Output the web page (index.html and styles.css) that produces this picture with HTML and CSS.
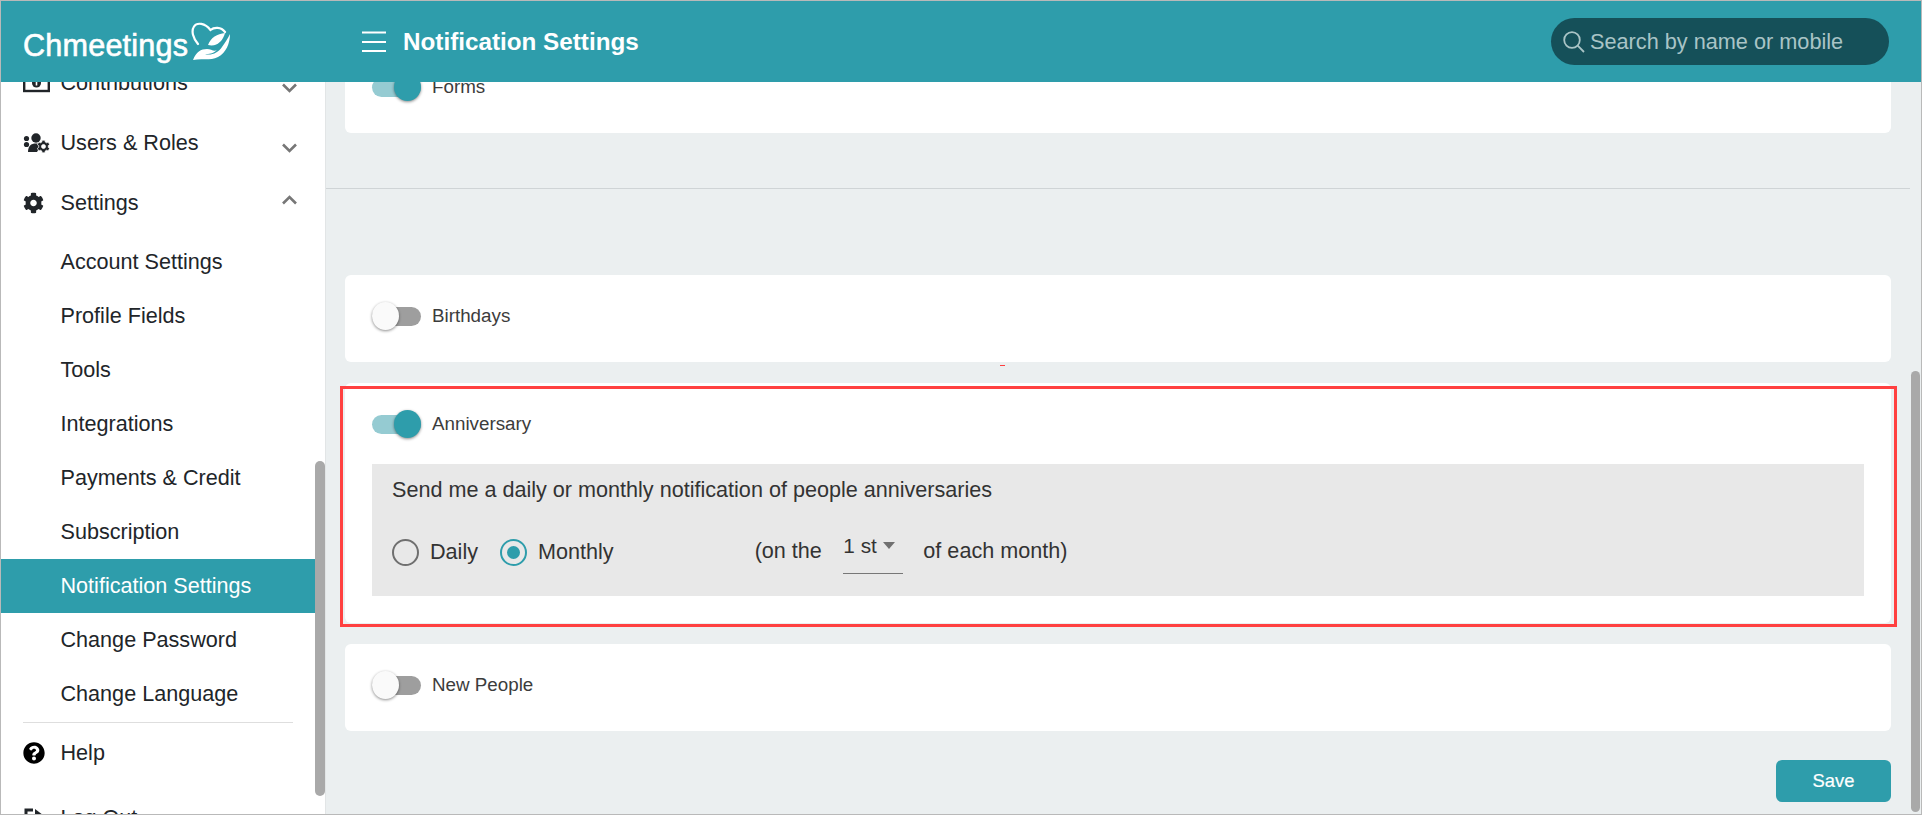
FILE: index.html
```html
<!DOCTYPE html>
<html lang="en">
<head>
<meta charset="utf-8">
<title>Notification Settings</title>
<link rel="stylesheet" href="styles.css">
</head>
<body>
<div class="frame">
  <header class="topbar">
    <div class="logo">
      <span class="logo-text">Chmeetings</span>
      <svg class="logo-mark" viewBox="0 0 40 40"><path d="M7 23C2 17 0 10 3 5.500C6 1 14 2 19.500 9C23 6 30 5.500 34 11" fill="none" stroke="#fff" stroke-width="2.200" stroke-linecap="round"/><path d="M2 39C5 31 10 28 16 28C20 28 23 31 26 29C22 33 18 33 14 33C20 35 27 32 31 26C34 22 37 17 39 13C39 22 35 32 27 36C19 40 10 37 2 39Z" fill="#fff"/><path d="M17 24C20 16 26 13 34 12C32 20 26 26 17 24Z" fill="#fff"/></svg>
    </div>
    <svg class="burger" viewBox="0 0 24 21"><path d="M0 1.500H24M0 11H24M0 20H24" stroke="#fff" stroke-width="2"/></svg>
    <h1 class="title">Notification Settings</h1>
    <div class="search">
      <svg class="search-icon" viewBox="0 0 22 22"><circle cx="9" cy="9" r="7.800" fill="none" stroke="#a9c4c6" stroke-width="1.800"/><path d="M14.700 14.700L21 21" stroke="#a9c4c6" stroke-width="1.800"/></svg>
      <span>Search by name or mobile</span>
    </div>
  </header>
  <div class="body">
    <aside class="sidebar">
      <nav class="nav">
        <a class="row">
          <svg class="ico" viewBox="0 0 27 20"><rect x="1.200" y="2" width="24.600" height="16" fill="none" stroke="#212529" stroke-width="2.400"/><circle cx="13.500" cy="10" r="4.500" fill="#212529"/><rect x="12.700" y="7.500" width="1.600" height="5" fill="#fff"/></svg>
          <span>Contributions</span>
          <svg class="chev chev-down" viewBox="0 0 15 10"><path d="M1 1.500L7.500 8L14 1.500" fill="none" stroke="#777" stroke-width="2.600"/></svg>
        </a>
        <a class="row">
          <svg class="ico" viewBox="0 0 27 20"><circle cx="3.500" cy="5.500" r="2.600" fill="#212529"/><circle cx="3.500" cy="11.500" r="2.600" fill="#212529"/><circle cx="13" cy="5" r="4.700" fill="#212529"/><path d="M5 19C5 13 8 10.500 13 10.500C15 10.500 17 11 18 12L14 19Z" fill="#212529"/><svg x="14" y="7" width="13" height="13" viewBox="0 0 512 512"><path fill="#212529" stroke="#fff" stroke-width="30" d="M487.400 315.700l-42.600-24.600c4.300-23.200 4.300-47 0-70.200l42.600-24.600c4.900-2.800 7.100-8.600 5.500-14-11.100-35.600-30-67.800-54.700-94.600-3.800-4.100-10-5.100-14.800-2.300L380.800 110c-17.900-15.400-38.500-27.300-60.800-35.100V25.800c0-5.600-3.900-10.500-9.400-11.700-36.700-8.200-74.300-7.800-109.200 0-5.500 1.200-9.400 6.100-9.400 11.700V75c-22.200 7.900-42.800 19.800-60.800 35.100L88.700 85.500c-4.900-2.800-11-1.900-14.800 2.300-24.700 26.700-43.600 58.900-54.700 94.600-1.700 5.400.6 11.200 5.500 14L67.300 221c-4.300 23.200-4.300 47 0 70.200l-42.600 24.600c-4.900 2.800-7.100 8.600-5.500 14 11.100 35.600 30 67.800 54.700 94.600 3.800 4.100 10 5.100 14.800 2.300l42.600-24.600c17.900 15.400 38.500 27.300 60.800 35.100v49.200c0 5.600 3.900 10.500 9.400 11.700 36.700 8.200 74.300 7.800 109.200 0 5.500-1.200 9.400-6.100 9.400-11.700v-49.200c22.200-7.900 42.800-19.800 60.800-35.100l42.600 24.600c4.900 2.800 11 1.900 14.800-2.300 24.700-26.700 43.600-58.900 54.700-94.600 1.500-5.500-.7-11.300-5.600-14.100zM256 336c-44.100 0-80-35.900-80-80s35.900-80 80-80 80 35.900 80 80-35.900 80-80 80z"/></svg></svg>
          <span>Users &amp; Roles</span>
          <svg class="chev chev-down" viewBox="0 0 15 10"><path d="M1 1.500L7.500 8L14 1.500" fill="none" stroke="#777" stroke-width="2.600"/></svg>
        </a>
        <a class="row">
          <svg class="ico ico-cog" viewBox="0 0 512 512"><path fill="#212529" d="M487.400 315.700l-42.600-24.600c4.300-23.200 4.300-47 0-70.200l42.600-24.600c4.900-2.800 7.100-8.600 5.500-14-11.100-35.600-30-67.800-54.700-94.600-3.800-4.100-10-5.100-14.800-2.300L380.800 110c-17.900-15.400-38.500-27.300-60.800-35.100V25.800c0-5.600-3.900-10.500-9.400-11.700-36.700-8.200-74.300-7.800-109.200 0-5.500 1.200-9.400 6.100-9.400 11.700V75c-22.200 7.900-42.800 19.800-60.800 35.100L88.700 85.500c-4.900-2.800-11-1.900-14.800 2.300-24.700 26.700-43.600 58.900-54.700 94.600-1.700 5.400.6 11.200 5.500 14L67.300 221c-4.300 23.200-4.300 47 0 70.200l-42.600 24.600c-4.900 2.800-7.100 8.600-5.500 14 11.100 35.600 30 67.800 54.700 94.600 3.800 4.100 10 5.100 14.800 2.300l42.600-24.600c17.900 15.400 38.500 27.300 60.800 35.100v49.200c0 5.600 3.900 10.500 9.400 11.700 36.700 8.200 74.300 7.800 109.200 0 5.500-1.200 9.400-6.100 9.400-11.700v-49.200c22.200-7.900 42.800-19.800 60.800-35.100l42.600 24.600c4.900 2.800 11 1.900 14.800-2.300 24.700-26.700 43.600-58.900 54.700-94.600 1.500-5.500-.7-11.300-5.600-14.100zM256 336c-44.100 0-80-35.900-80-80s35.900-80 80-80 80 35.900 80 80-35.900 80-80 80z"/></svg>
          <span>Settings</span>
          <svg class="chev chev-up" viewBox="0 0 15 10"><path d="M1 8.500L7.500 2L14 8.500" fill="none" stroke="#777" stroke-width="2.600"/></svg>
        </a>
        <ul class="sub">
          <li class="sub-row">Account Settings</li>
          <li class="sub-row">Profile Fields</li>
          <li class="sub-row">Tools</li>
          <li class="sub-row">Integrations</li>
          <li class="sub-row">Payments &amp; Credit</li>
          <li class="sub-row">Subscription</li>
          <li class="sub-row active">Notification Settings</li>
          <li class="sub-row">Change Password</li>
          <li class="sub-row">Change Language</li>
        </ul>
        <div class="divider"></div>
        <a class="row">
          <svg class="ico ico-help" viewBox="0 0 512 512"><path fill="#000" d="M504 256c0 136.997-111.043 248-248 248S8 392.997 8 256C8 119.083 119.043 8 256 8s248 111.083 248 248zM262.655 90c-54.497 0-89.255 22.957-116.549 63.758-3.536 5.286-2.353 12.415 2.715 16.258l34.699 26.310c5.205 3.947 12.621 3.008 16.665-2.122 17.864-22.658 30.113-35.797 57.303-35.797 20.429 0 45.698 13.148 45.698 32.958 0 14.976-12.363 22.667-32.534 33.976C247.128 238.528 216 254.941 216 296v4c0 6.627 5.373 12 12 12h56c6.627 0 12-5.373 12-12v-1.333c0-28.462 83.186-29.647 83.186-106.667 0-58.002-60.165-102-116.531-102zM256 338c-25.365 0-46 20.635-46 46 0 25.364 20.635 46 46 46s46-20.636 46-46c0-25.365-20.635-46-46-46z"/></svg>
          <span>Help</span>
        </a>
        <a class="row row-logout">
          <svg class="ico" viewBox="0 0 27 20"><path d="M10 2H3V18H10" fill="none" stroke="#212529" stroke-width="3"/><path d="M12 1L24 10L12 19Z" fill="#212529"/></svg>
          <span>Log Out</span>
        </a>
      </nav>
      <div class="track track-side"><div class="thumb thumb-side"></div></div>
    </aside>
    <main class="main">
      <div class="content">
        <section class="card card-forms">
          <div class="switch-row"><span class="toggle on"><i></i></span><span class="switch-label">Forms</span></div>
        </section>
        <hr class="rule">
        <section class="card card-birthdays">
          <div class="switch-row"><span class="toggle"><i></i></span><span class="switch-label">Birthdays</span></div>
        </section>
        <section class="card card-open">
          <span class="dash"></span>
          <span class="highlight"></span>
          <div class="switch-row"><span class="toggle on"><i></i></span><span class="switch-label">Anniversary</span></div>
          <div class="panel">
            <p class="panel-text">Send me a daily or monthly notification of people anniversaries</p>
            <div class="options">
              <span class="radio"></span><span class="opt-label">Daily</span>
              <span class="radio checked"></span><span class="opt-label">Monthly</span>
              <span class="on-the">(on the</span>
              <span class="select"><span>1 st</span><i class="caret"></i></span>
              <span class="each">of each month)</span>
            </div>
          </div>
        </section>
        <section class="card card-people">
          <div class="switch-row"><span class="toggle"><i></i></span><span class="switch-label">New People</span></div>
        </section>
        <div class="actions"><button class="save" type="button">Save</button></div>
      </div>
      <div class="track track-main"><div class="thumb thumb-main"></div></div>
    </main>
  </div>
</div>
</body>
</html>
```
FILE: styles.css
```css
* { box-sizing: border-box; }
html, body { margin: 0; padding: 0; height: 100%; overflow: hidden; }
body { font-family: "Liberation Sans", Arial, sans-serif; color: #212529; background: #fff; }
.frame { width: 1922px; height: 815px; border: 1px solid #b9b9b9; display: flex; flex-direction: column; overflow: hidden; }

.topbar { height: 81px; flex: none; background: #2e9dab; display: flex; align-items: center; color: #fff; position: relative; z-index: 2; }
.logo { width: 361px; padding-left: 22px; display: flex; align-items: flex-start; height: 81px; flex: none; }
.logo-text { font-size: 30.600px; letter-spacing: .2px; line-height: 34px; margin-top: 27px; -webkit-text-stroke: .6px #fff; }
.logo-mark { width: 40px; height: 40px; margin: 20px 0 0 3px; flex: none; }
.burger { width: 24px; height: 21px; flex: none; }
.title { margin: 0 0 0 17px; font-size: 24.250px; font-weight: 700; line-height: 30px; }
.search { margin-left: auto; margin-right: 32px; width: 338px; height: 47px; border-radius: 24px; background: #155059; color: #a9c4c6; font-size: 21.700px; display: flex; align-items: center; padding-left: 12px; }
.search-icon { width: 22px; height: 22px; margin-right: 5px; flex: none; }

.body { flex: 1; min-height: 0; display: flex; }

.sidebar { width: 325px; flex: none; background: #fff; display: flex; overflow: hidden; border-right: 1px solid #e2e5e6; }
.nav { width: 314px; flex: none; margin-top: -29px; font-size: 21.600px; }
.row { display: flex; align-items: center; height: 60px; padding-left: 22px; position: relative; }
.row-logout { margin-top: 5px; }
.ico { width: 27px; height: 20px; margin-right: 10.500px; flex: none; }
.ico-cog { width: 21px; height: 22px; margin-right: 16.500px; }
.ico-help { width: 22px; height: 22px; margin-right: 15.500px; }
.chev { width: 15px; height: 10px; position: absolute; left: 281px; }
.chev-down { top: 30px; }
.chev-up { top: 22px; }
.sub { list-style: none; margin: 2px 0 0; padding: 0; }
.sub-row { height: 54px; line-height: 54px; padding-left: 59.500px; }
.sub-row.active { background: #2e9dab; color: #fff; }
.divider { height: 1px; background: #dedede; margin: 1px 22px 0; }

.track { flex: none; }
.track-side { width: 10px; padding-top: 379px; }
.thumb { background: #a9a9a9; border-radius: 5px; }
.thumb-side { width: 10px; height: 335px; }

.main { flex: 1; min-width: 0; background: #ebeff0; display: flex; overflow: hidden; }
.content { flex: 1; min-width: 0; margin-top: -36px; }
.track-main { width: 11px; padding: 289px 1px 0 1px; }
.thumb-main { width: 9px; height: 441px; }

.card { background: #fff; border-radius: 6px; margin: 0 19px 0 19px; padding: 27px 27px 32px; position: relative; }
.card-open { margin-top: 21px; padding-bottom: 27px; }
.card-people { margin-top: 21px; }
.rule { border: 0; height: 1px; background: #cfd4d6; margin: 55px 0 86px; }

.switch-row { display: flex; align-items: center; height: 28px; }
.toggle { width: 49px; height: 19px; border-radius: 10px; background: #9e9e9e; position: relative; flex: none; }
.toggle i { position: absolute; left: 0; top: -5px; width: 27px; height: 28px; border-radius: 50%; background: #fafafa; box-shadow: 0 1px 3px rgba(0,0,0,.45); }
.toggle.on { background: #95cbd2; }
.toggle.on i { left: 22px; background: #2e9dab; }
.switch-label { margin-left: 11px; font-size: 18.800px; color: #3c3c3c; }

.panel { margin-top: 26px; height: 132px; background: #e8e8e8; padding: 13px 20px 0; font-size: 21.600px; color: #333; }
.panel-text { margin: 0; line-height: 26px; }
.options { display: flex; align-items: center; height: 28px; margin-top: 35px; position: relative; }
.radio { width: 27px; height: 27px; border-radius: 50%; border: 2px solid #6f6f6f; flex: none; position: relative; }
.radio.checked { border-color: #2e9dab; margin-left: 22px; }
.radio.checked::after { content: ""; position: absolute; left: 5px; top: 5px; width: 13px; height: 13px; border-radius: 50%; background: #2e9dab; }
.opt-label { margin-left: 11px; }
.on-the { margin-left: 141px; margin-top: -3px; }
.select { margin-left: 21.500px; width: 60px; height: 41px; border-bottom: 1px solid #777; display: flex; align-items: center; padding: 0 0 15px 0; margin-top: 3px; font-size: 20.800px; }
.caret { width: 0; height: 0; margin-left: 6px; border-left: 6.500px solid transparent; border-right: 6.500px solid transparent; border-top: 7px solid #707070; }
.each { margin-left: 20px; margin-top: -3px; }

.highlight { position: absolute; left: -5px; right: -6px; top: 3px; bottom: -4px; border: 3px solid #ff4040; pointer-events: none; }
.dash { position: absolute; left: 655px; top: -18px; width: 5px; height: 1px; background: #ff4040; }

.actions { display: flex; justify-content: flex-end; margin: 29px 19px 0 0; }
.save { width: 115px; height: 42px; border: 0; border-radius: 6px; background: #2e9dab; color: #fff; font: 400 18.400px "Liberation Sans", Arial, sans-serif; -webkit-text-stroke: .2px #fff; }
```
